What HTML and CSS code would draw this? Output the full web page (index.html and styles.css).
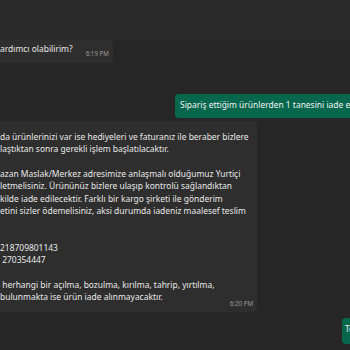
FILE: index.html
```html
<!DOCTYPE html>
<html lang="tr">
<head>
    <meta charset="UTF-8">
    <meta name="viewport" content="width=device-width, initial-scale=1.0">
    <title>Sohbet</title>
    <link rel="stylesheet" href="styles.css">
</head>
<body>
    <div class="chat">
        <div class="top-band"></div>
        <div class="messages">
            <div class="row in first">
                <div class="bubble">
                    <div class="text">ardımcı olabilirim?</div>
                    <div class="time">6:19 PM</div>
                </div>
            </div>
            <div class="row out">
                <div class="bubble">
                    <div class="text">Sipariş ettiğim ürünlerden 1 tanesini iade etmek istiyorum</div>
                </div>
            </div>
            <div class="row in long">
                <div class="bubble">
                    <div class="text">
                        <p>da ürünlerinizi var ise hediyeleri ve faturanız ile beraber bizlere<br>laştıktan sonra gerekli işlem başlatılacaktır.</p>
                        <p>azan Maslak/Merkez adresimize anlaşmalı olduğumuz Yurtiçi<br>letmelisiniz. Ürününüz bizlere ulaşıp kontrolü sağlandıktan<br>kilde iade edilecektir. Farklı bir kargo şirketi ile gönderim<br>etini sizler ödemelisiniz, aksi durumda iadeniz maalesef teslim<br>&nbsp;</p>
                        <p>218709801143<br>&nbsp;270354447</p>
                        <p>&nbsp;herhangi bir açılma, bozulma, kırılma, tahrip, yırtılma,<br>bulunmakta ise ürün iade alınmayacaktır.</p>
                    </div>
                    <div class="time">6:20 PM</div>
                </div>
            </div>
            <div class="row out last">
                <div class="bubble">
                    <div class="text">Teşekkür ederim</div>
                </div>
            </div>
        </div>
    </div>
</body>
</html>
```

FILE: styles.css
```css
body {
    margin: 0;
    background-color: #262626;
    font-family: "Noto Sans", "Open Sans", sans-serif;
    color: #e8e8e8;
    overflow: hidden;
}
.chat {
    width: 350px;
    height: 350px;
    overflow: hidden;
}
.top-band {
    height: 40px;
    background-color: #2a2a2a;
}
.messages {
    display: flex;
    flex-direction: column;
}
.row {
    display: flex;
    white-space: nowrap;
}
.bubble {
    background-color: #2e2e2e;
    border-radius: 4px;
}
.text {
    font-size: 8.45px;
    line-height: 12.35px;
}
.text p {
    margin: 0 0 12.35px;
}
.text p:last-child {
    margin-bottom: 0;
}
.time {
    font-size: 6.2px;
    line-height: 8px;
    color: #9a9a9a;
}

/* incoming */
.in .bubble {
    border-top-left-radius: 0;
    border-bottom-left-radius: 0;
}
.in.first .bubble {
    display: flex;
    align-items: flex-end;
    padding: 3px 4px 5px 0;
}
.in.first .text {
    margin: 0 13px 2.65px 0;
}
.in.long {
    margin-top: 3px;
}
.in.long .bubble {
    display: grid;
    width: 253px;
    padding: 10px 4px 4px 0;
}
.in.long .text,
.in.long .time {
    grid-area: 1 / 1;
}
.in.long .text {
    padding-bottom: 4px;
}
.in.long .time {
    justify-self: end;
    align-self: end;
}

/* outgoing */
.out .bubble {
    background-color: #06674d;
    color: #f2f2f2;
    border-top-right-radius: 0;
    border-bottom-right-radius: 0;
}
.out {
    margin-top: 31px;
    padding-left: 175px;
}
.out .bubble {
    padding: 5px 20px 6.5px 5px;
}
.out.last {
    margin-top: 6px;
    padding-left: 342px;
}
.out.last .bubble {
    padding: 5px 20px 9.5px 3px;
}
```
